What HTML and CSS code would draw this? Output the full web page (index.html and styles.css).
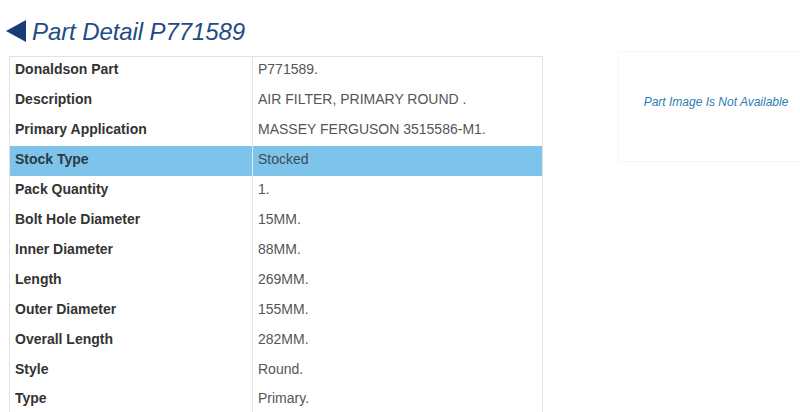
FILE: index.html
```html
<!DOCTYPE html>
<html>
<head>
<meta charset="utf-8">
<link rel="stylesheet" href="styles.css">
</head>
<body>
<div class="page">
  <h1 class="title">
    <svg class="back" width="20" height="22" viewBox="0 0 20 22"><polygon points="20,0 20,22 0,11" fill="#1b3a78"/></svg>
    <span>Part Detail P771589</span>
  </h1>
  <div class="content">
    <table class="detail">
      <tr><th>Donaldson Part</th><td>P771589.</td></tr>
      <tr><th>Description</th><td>AIR FILTER, PRIMARY ROUND .</td></tr>
      <tr><th>Primary Application</th><td>MASSEY FERGUSON 3515586-M1.</td></tr>
      <tr class="hl"><th>Stock Type</th><td>Stocked</td></tr>
      <tr><th>Pack Quantity</th><td>1.</td></tr>
      <tr><th>Bolt Hole Diameter</th><td>15MM.</td></tr>
      <tr><th>Inner Diameter</th><td>88MM.</td></tr>
      <tr><th>Length</th><td>269MM.</td></tr>
      <tr><th>Outer Diameter</th><td>155MM.</td></tr>
      <tr><th>Overall Length</th><td>282MM.</td></tr>
      <tr><th>Style</th><td>Round.</td></tr>
      <tr><th>Type</th><td>Primary.</td></tr>
    </table>
    <div class="image-box">Part Image Is Not Available</div>
  </div>
</div>
</body>
</html>
```
FILE: styles.css
```css
html, body {
  margin: 0;
  padding: 0;
  background: #fff;
  overflow: hidden;
}
body {
  font-family: "Liberation Sans", Arial, sans-serif;
  width: 800px;
  height: 412px;
}
.page {
  padding: 17px 0 0 6px;
}
.title {
  display: flex;
  align-items: center;
  gap: 6px;
  margin: 0;
  height: 28px;
  font-size: 24px;
  font-weight: normal;
  font-style: italic;
  color: #1f4b84;
}
.title span {
  position: relative;
  top: 1px;
  letter-spacing: -0.1px;
}
.content {
  display: flex;
  align-items: flex-start;
  margin-top: 10px;
  padding-left: 3px;
}
.detail {
  flex: none;
  border-collapse: collapse;
  width: 534px;
  margin-top: 1px;
  border: 1px solid #e2e2e2;
  font-size: 14px;
}
.detail th, .detail td {
  height: 30px;
  padding: 0 5px 4px;
  text-align: left;
  vertical-align: middle;
  box-sizing: border-box;
}
.detail th {
  width: 243px;
  font-weight: bold;
  color: #333;
  border-right: 1px solid #e6e6e6;
}
.detail td {
  color: #555;
}
.detail tr:first-child th, .detail tr:first-child td {
  height: 29px;
}
.detail tr.hl th, .detail tr.hl td {
  background: #7ec4ea;
  color: #2a3a48;
}
.detail tr.hl td {
  color: #3a4a58;
}
.image-box {
  flex: none;
  width: 196px;
  height: 111px;
  margin-left: 75px;
  margin-top: -4px;
  padding-top: 43px;
  border: 1px solid #f6f6f6;
  box-sizing: border-box;
  text-align: center;
  font-size: 12px;
  font-style: italic;
  color: #2b7db3;
}
```
